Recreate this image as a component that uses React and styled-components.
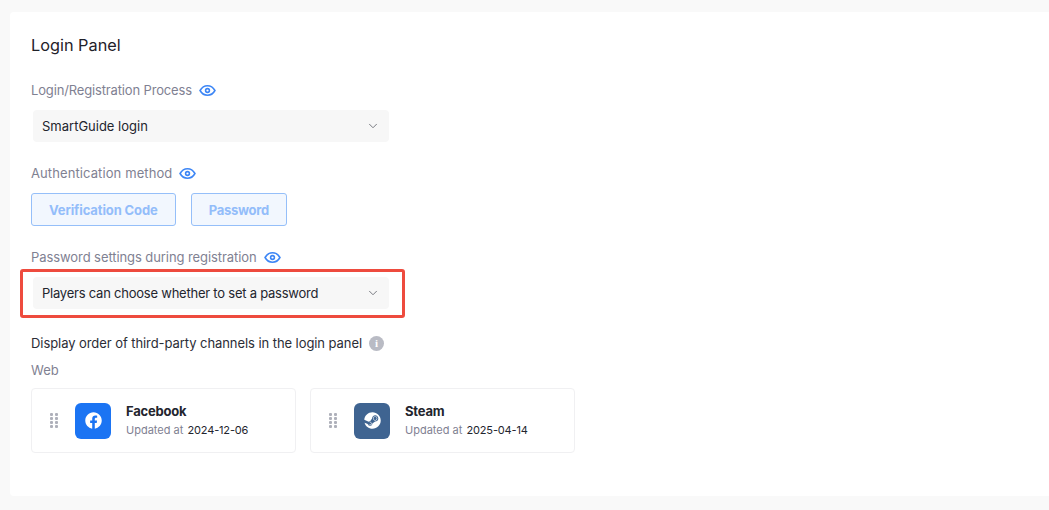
import React from 'react';
import styled, { createGlobalStyle } from 'styled-components';
import { FaFacebook, FaSteam } from 'react-icons/fa';
import { ChevronDown } from 'lucide-react';

const Global = createGlobalStyle`
  html, body { margin: 0; padding: 0; background: #f9f9f9; overflow: hidden; }
  body { font-family: Inter, "Noto Sans", sans-serif; }
`;

const Page = styled.div`
  height: 510px;
  padding: 12px 0 14px 10px;
  box-sizing: border-box;
  display: flex;
`;

const Panel = styled.section`
  flex: 1;
  background: #fff;
  border-radius: 4px 0 0 4px;
  padding: 22px 0 0 21px;
`;

const Title = styled.h2`
  margin: 0 0 24px;
  font-size: 16.300px;
  line-height: 22px;
  font-weight: 400;
  color: #1f2129;
`;

const Label = styled.div`
  display: flex;
  align-items: center;
  gap: 7px;
  height: 20px;
  margin-top: ${p => p.$top || 0}px;
  font-size: 13px;
  letter-spacing: ${p => p.$track || 0}px;
  color: ${p => (p.$dark ? '#2b2d36' : '#7f8192')};
`;

const Eye = () => (
  <svg width="17" height="17" viewBox="0 0 16 16" fill="none" stroke="#3d86f5" strokeWidth="1.500">
    <path d="M1 8c1.700-3 4-4.500 7-4.500S13.300 5 15 8c-1.700 3-4 4.500-7 4.500S2.700 11 1 8z" />
    <circle cx="8" cy="8" r="1.800" />
  </svg>
);

const SelectBox = styled.div`
  width: 356px;
  height: 32px;
  margin: 10px 0 0 2px;
  padding: 0 9px;
  box-sizing: border-box;
  display: flex;
  align-items: center;
  justify-content: space-between;
  background: #f7f7f7;
  border-radius: 4px;
  font-size: 13px;
  letter-spacing: ${p => p.$track || 0}px;
  color: #23252e;
`;

const Field = styled.div`
  position: relative;
  margin-bottom: ${p => p.$gap}px;
`;

const Highlight = styled.div`
  position: absolute;
  left: -11px;
  top: 22px;
  width: 385px;
  height: 49px;
  box-sizing: border-box;
  border: 3px solid #ee4b3e;
  border-radius: 3px;
`;

const Buttons = styled.div`
  display: flex;
  gap: 15px;
  margin-top: 10px;
`;

const MethodButton = styled.div`
  height: 33px;
  padding: 0 17px;
  box-sizing: border-box;
  display: flex;
  align-items: center;
  background: #f2f7fe;
  border: 1px solid #95bff9;
  border-radius: 3px;
  font-size: 13px;
  font-weight: 700;
  letter-spacing: ${p => p.$track || 0}px;
  color: #93bdfa;
`;

const Info = styled.span`
  width: 15px;
  height: 15px;
  border-radius: 50%;
  background: #b9bbc4;
  display: flex;
  align-items: center;
  justify-content: center;
  color: #fff;
  font-size: 11px;
  font-weight: 700;
  font-family: "Liberation Serif", serif;
`;

const Cards = styled.div`
  display: flex;
  gap: 14px;
  margin-top: 8px;
`;

const Card = styled.div`
  width: 265px;
  height: 65px;
  box-sizing: border-box;
  display: flex;
  align-items: center;
  border: 1px solid #f0f0f2;
  border-radius: 4px;
  padding-left: 18px;
`;

const Grip = styled.div`
  display: grid;
  grid-template-columns: 3px 3px;
  gap: 1.500px 2px;
  width: 8px;
  margin-right: 17px;
  i { width: 3px; height: 2.500px; border-radius: 1px; background: #aeb0ba; }
`;

const Logo = styled.div`
  width: 36px;
  height: 36px;
  border-radius: 6px;
  background: ${p => p.$color};
  display: flex;
  align-items: center;
  justify-content: center;
  color: #fff;
  font-size: 17px;
  margin-right: 15px;
`;

const Name = styled.div`
  font-size: 13px;
  line-height: 18px;
  font-weight: 700;
  letter-spacing: -0.200px;
  color: #23252e;
`;

const Updated = styled.div`
  font-size: 11px;
  line-height: 18px;
  margin-top: 1px;
  color: #7f8192;
  span { color: #23252e; margin-left: 1px; letter-spacing: -0.150px; }
`;

const channels = [
  { name: 'Facebook', date: '2024-12-06', color: '#1b74f3', Icon: FaFacebook },
  { name: 'Steam', date: '2025-04-14', color: '#3f6491', Icon: FaSteam },
];

const Chevron = () => <ChevronDown size={14} color="#6f7179" strokeWidth={1.600} />;

export default function App() {
  return (
    <Page>
      <Global />
      <Panel>
        <Title>Login Panel</Title>
        <Field $gap={21}>
          <Label $track={-0.15}>Login/Registration Process <Eye /></Label>
          <SelectBox>SmartGuide login <Chevron /></SelectBox>
        </Field>
        <Field $gap={21}>
          <Label $track={0.1}>Authentication method <Eye /></Label>
          <Buttons>
            <MethodButton $track={-0.12}>Verification Code</MethodButton>
            <MethodButton $track={-0.25}>Password</MethodButton>
          </Buttons>
        </Field>
        <Field $gap={24}>
          <Label $track={-0.08}>Password settings during registration <Eye /></Label>
          <SelectBox $track={-0.23}>Players can choose whether to set a password <Chevron /></SelectBox>
          <Highlight />
        </Field>
        <Label $dark $track={-0.07}>Display order of third-party channels in the login panel <Info>i</Info></Label>
        <Label $top={7}>Web</Label>
        <Cards>
          {channels.map(({ name, date, color, Icon }) => (
            <Card key={name}>
              <Grip>{Array.from({ length: 8 }, (_, i) => <i key={i} />)}</Grip>
              <Logo $color={color}><Icon /></Logo>
              <div>
                <Name>{name}</Name>
                <Updated>Updated at <span>{date}</span></Updated>
              </div>
            </Card>
          ))}
        </Cards>
      </Panel>
    </Page>
  );
}
